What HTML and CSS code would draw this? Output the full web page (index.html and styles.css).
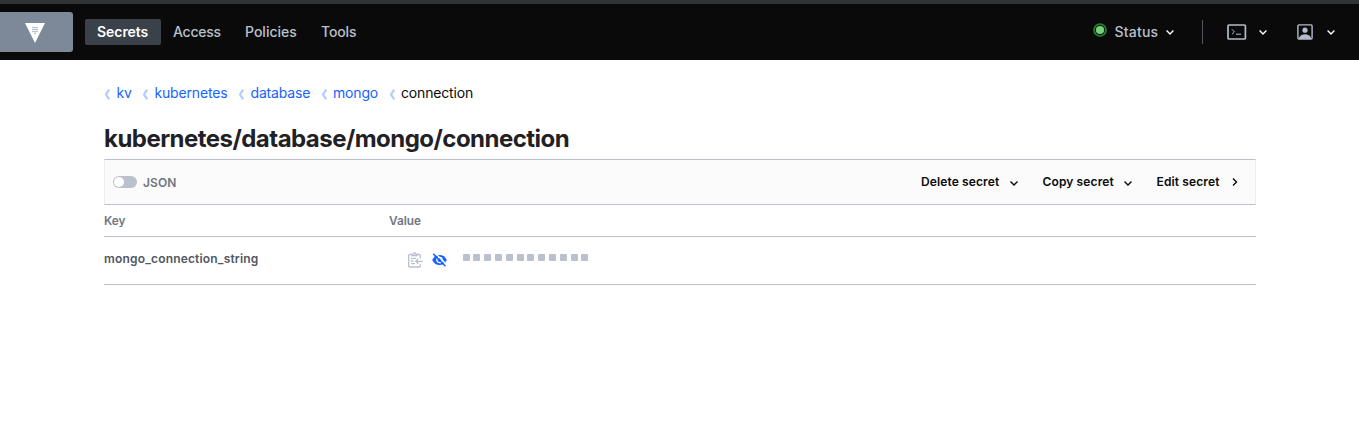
FILE: index.html
```
<!DOCTYPE html>
<html lang="en">
<head>
<meta charset="utf-8">
<title>Vault</title>
<link rel="stylesheet" href="styles.css">
</head>
<body>
<header class="navbar">
  <a class="brand"><svg width="20" height="20" viewBox="0 0 20 20"><path d="M0 0H20L10 20Z" fill="#fff"/><path d="M7.3 4.7h1.4M9.3 4.7h1.4M11.3 4.7h1.4M7.3 6.7h1.4M9.3 6.7h1.4M11.3 6.7h1.4M7.3 8.7h1.4M9.3 8.7h1.4M11.3 8.7h1.4M9.3 10.4h1.4" stroke="#8a94a3" stroke-width="1"/></svg></a>
  <nav class="links">
    <a class="link active"><span>Secrets</span></a>
    <a class="link access"><span>Access</span></a>
    <a class="link policies"><span>Policies</span></a>
    <a class="link"><span>Tools</span></a>
  </nav>
  <div class="status">
    <svg class="led" width="14" height="14" viewBox="0 0 14 14"><circle cx="7" cy="7" r="6" fill="#0a1a0c" stroke="#2a8032" stroke-width="1.7"/><circle cx="7" cy="7" r="4.1" fill="#76cf7e"/></svg>
    <span class="status-text">Status</span>
    <svg class="chev" width="8" height="5" viewBox="0 0 8 5"><path d="M.6.6 4 4 7.4.6" /></svg>
  </div>
  <i class="divider"></i>
  <svg class="console" width="20" height="16" viewBox="0 0 20 16" fill="none" stroke="#b4bac8"><rect x="1" y="1" width="17.4" height="14" rx="1" stroke-width="1.7"/><path d="M5 5.4 7.4 7.9 5 10.2M9 10.2h5" stroke-width="1"/></svg>
  <svg class="chev" width="8" height="5" viewBox="0 0 8 5"><path d="M.6.6 4 4 7.4.6"/></svg>
  <svg class="user" width="16" height="16" viewBox="0 0 16 16"><rect x=".9" y=".9" width="14.2" height="14.2" rx="1" fill="none" stroke="#b4bac8" stroke-width="1.4"/><circle cx="8" cy="6.2" r="2.6" fill="#b4bac8"/><path d="M2 15v-1.5C3.500 11.200 5.500 10.300 8 10.300s4.500.9 6 3.200V15Z" fill="#b4bac8"/></svg>
  <svg class="chev" width="8" height="5" viewBox="0 0 8 5"><path d="M.6.6 4 4 7.4.6"/></svg>
</header>
<main class="page">
  <nav class="crumbs">
    <a class="crumb c1"><svg width="7" height="11" viewBox="0 0 7 11"><path d="M5.200.6 2 5.500l3.200 4.900"/></svg><span>kv</span></a>
    <a class="crumb c2"><svg width="7" height="11" viewBox="0 0 7 11"><path d="M5.200.6 2 5.500l3.200 4.900"/></svg><span>kubernetes</span></a>
    <a class="crumb c3"><svg width="7" height="11" viewBox="0 0 7 11"><path d="M5.200.6 2 5.500l3.200 4.900"/></svg><span>database</span></a>
    <a class="crumb c4"><svg width="7" height="11" viewBox="0 0 7 11"><path d="M5.200.6 2 5.500l3.200 4.900"/></svg><span>mongo</span></a>
    <a class="crumb current"><svg width="7" height="11" viewBox="0 0 7 11"><path d="M5.200.6 2 5.500l3.200 4.900"/></svg><span>connection</span></a>
  </nav>
  <h1 class="title"><span>kubernetes/database/mongo/connection</span></h1>
  <div class="toolbar">
    <i class="switch"></i><span class="json">JSON</span>
    <div class="actions">
      <a class="action delete"><span>Delete secret</span><svg width="8" height="5" viewBox="0 0 8 5"><path d="M.5.5 4 4 7.500.5"/></svg></a>
      <a class="action copy"><span>Copy secret</span><svg width="8" height="5" viewBox="0 0 8 5"><path d="M.5.5 4 4 7.500.5"/></svg></a>
      <a class="action edit"><span>Edit secret</span><svg width="6" height="8" viewBox="0 0 6 8"><path d="M1 .5 4.500 4 1 7.500"/></svg></a>
    </div>
  </div>
  <div class="head"><span class="key">Key</span><span>Value</span></div>
  <div class="row">
    <span class="name">mongo_connection_string</span>
    <svg class="clip" width="15" height="16" viewBox="0 0 15 16" fill="none" stroke="#b9bfcd" stroke-width="1.3"><path d="M3.500 2.500H1.600Q.7 2.500.7 3.400V14.200Q.7 15 1.600 15H11.400Q12.300 15 12.300 14.200V12.300M9.500 2.500h1.900q.9 0 .9.900V6.500"/><path d="M4 3.700V2.100H5.500Q5.500.7 6.500.7T7.500 2.100H9V3.700Z"/><path d="M3 6.300h5M3 9h2.500M3 11.700h4M14.800 9.300H7.800M10.300 6.800 7.800 9.300l2.500 2.500"/></svg>
    <svg class="eye" width="15" height="14" viewBox="0 0 15 14"><path d="M.2 7C1.600 3.900 4.200 2 7.500 2S13.400 3.900 14.800 7C13.400 10.100 10.800 12 7.500 12S1.600 10.100.2 7Z" fill="#1563ff"/><circle cx="7.500" cy="7" r="2.700" fill="#1563ff" stroke="#fff" stroke-width="1.3"/><path d="M2.700-.3 15 12" stroke="#fff" stroke-width="1.300"/><path d="M1.200.7 13.500 13.200" stroke="#1563ff" stroke-width="1.500"/></svg>
    <div class="mask"><i></i><i></i><i></i><i></i><i></i><i></i><i></i><i></i><i></i><i></i><i></i><i></i></div>
  </div>
</main>
</body>
</html>
```
FILE: styles.css
```
* { box-sizing: border-box; }
body { margin: 0; background: #fff; color: #1f2124; font-family: Inter, "Liberation Sans", sans-serif; }
svg { display: block; flex: none; }
i { display: block; flex: none; }
span { white-space: nowrap; }
.navbar { height: 60px; display: flex; align-items: center; background: #0a0a0a; border-top: 4px solid #303438; padding-right: 24px; }
.brand { width: 73px; height: 40px; background: #7d8998; border-radius: 0 3px 3px 0; padding: 11px 0 0 25px; }
.links { display: flex; margin-left: 12px; }
.link { height: 26px; line-height: 26px; padding: 0 12px; font-size: 14px; font-weight: 500; letter-spacing: -.15px; color: #bac1cc; }
.active { background: #3b414a; border-radius: 2px; color: #fff; width: 76px; font-weight: 600; letter-spacing: -.05px; }
.access { width: 72px; letter-spacing: -.25px; }
.policies { width: 76px; letter-spacing: 0; }
.status { display: flex; align-items: center; margin-left: auto; }
.led { margin: -4px 7.5px 0 0; }
.status-text { width: 51.5px; margin-top: -1px; font-size: 14px; line-height: 16px; font-weight: 500; letter-spacing: .2px; color: #bac1cc; }
.chev { fill: none; stroke: #fff; stroke-width: 1.4; }
.divider { width: 1px; height: 24px; margin: 0 24px 0 28px; background: #525761; }
.console { margin-right: 12px; }
.user { margin: 0 14px 0 30px; }
.page { margin: 0 103px 0 104px; }
.crumbs { display: flex; height: 63px; padding-top: 24px; font-size: 14px; line-height: 18px; letter-spacing: -.17px; color: #1563ff; }
.crumb { display: flex; height: 18px; }
.crumb svg { width: 7px; margin: 5px 5.5px 0 0; fill: none; stroke: #b3ccff; stroke-width: 2.2; }
.c1 { width: 38px; } .c2 { width: 96px; } .c3 { width: 82.5px; } .c4 { width: 68px; }
.current { color: #0a0a0a; }
.title { height: 36px; margin: 0; font-size: 24px; line-height: 32px; font-weight: 700; letter-spacing: -.53px; }
.toolbar { height: 46px; display: flex; align-items: center; background: #fbfbfc; border: 1px solid #ebeef2; border-top-color: #bac1cc; border-bottom-color: #bac1cc; padding: 0 16px 0 8px; }
.switch { width: 24px; height: 12px; border-radius: 6px; background: #bac1cc; padding: 1px; }
.switch::before { content: ""; display: block; width: 10px; height: 10px; border-radius: 50%; background: #fff; }
.json { margin: 2px 0 0 6px; font-size: 12px; line-height: 14px; font-weight: 600; letter-spacing: .1px; color: #6f7682; }
.actions { display: flex; margin-left: auto; font-size: 12px; line-height: 14px; font-weight: 600; letter-spacing: .12px; color: #0a0a0a; }
.action { height: 14px; display: flex; align-items: center; justify-content: space-between; }
.action svg { fill: none; stroke: #0a0a0a; stroke-width: 1.4; }
.delete { width: 97px; margin-right: 24.5px; }
.copy { width: 89.5px; margin-right: 24.5px; }
.delete svg, .copy svg { margin-top: 2px; }
.edit { width: 81.5px; margin-right: 1px; }
.head { display: flex; height: 32px; line-height: 32px; border-bottom: 1px solid #bac1cc; font-size: 11.8px; font-weight: 600; color: #6f7682; }
.key { width: 285px; }
.row { display: flex; height: 48px; padding-top: 16px; border-bottom: 1px solid #bac1cc; }
.name { width: 303.5px; font-size: 12px; line-height: 12px; font-weight: 600; letter-spacing: .18px; color: #525761; }
.clip { margin: -1px 9px 0 0; }
.eye { margin: 0; }
.mask { display: flex; gap: 3.82px; margin: 1px 0 0 16px; }
.mask i { width: 7px; height: 7px; border-radius: 1px; background: #bac1cc; }
```
